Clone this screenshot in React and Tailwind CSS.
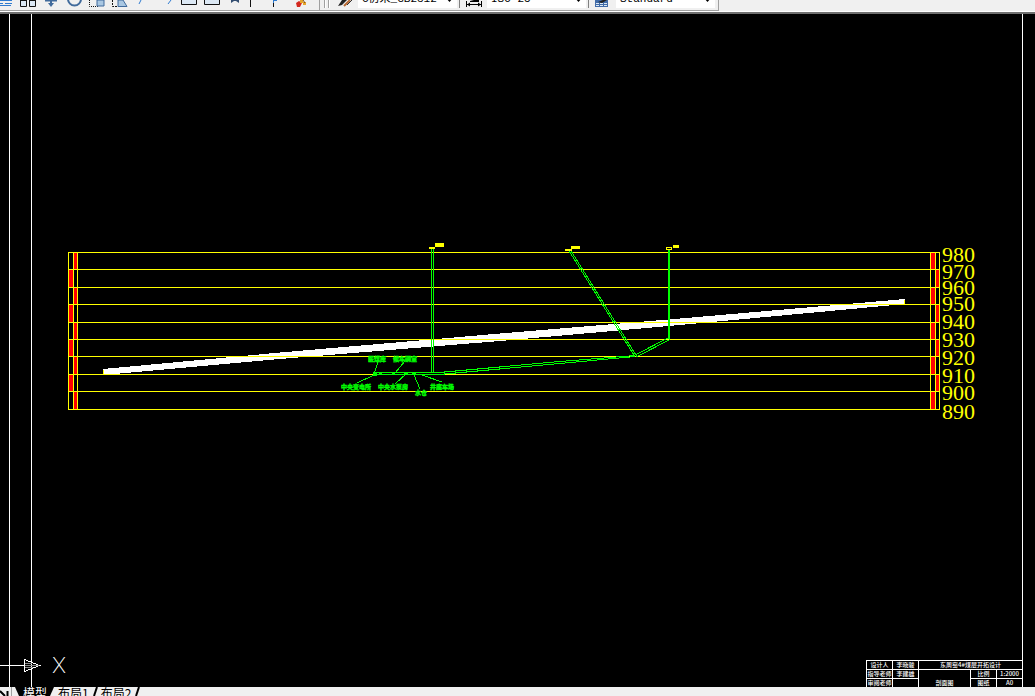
const levels = [
  { label: '980', y: 252, textY: 262 },
  { label: '970', y: 269, textY: 279 },
  { label: '960', y: 287, textY: 295 },
  { label: '950', y: 304, textY: 311 },
  { label: '940', y: 322, textY: 329 },
  { label: '930', y: 339, textY: 347 },
  { label: '920', y: 356, textY: 365 },
  { label: '910', y: 374, textY: 383 },
  { label: '900', y: 391, textY: 400 },
  { label: '890', y: 409, textY: 419 },
]

const roomLabels = [
  { text: '医煤库', x: 368, y: 361 },
  { text: '候车硐室', x: 393, y: 361 },
  { text: '中央变电所', x: 341, y: 389 },
  { text: '中央水泵房', x: 378, y: 389 },
  { text: '水仓', x: 415, y: 395 },
  { text: '井底车场', x: 430, y: 389 },
]

const leaders = [
  'M374 374 L378 362',
  'M395 373 L405 361',
  'M374 375 L357 383',
  'M406 374 L395 384',
  'M414 375 L420 389',
  'M422 375 L442 382',
]

function StyleSelect({ label, value }) {
  return (
    <div className="relative w-[99px] shrink-0">
      <select
        aria-label={label}
        defaultValue={value}
        className="block h-[22px] w-full appearance-none bg-white pt-1 pl-1 text-[11px] text-black font-['Liberation_Mono','Noto_Sans_CJK_SC',monospace]"
      >
        <option>{value}</option>
      </select>
      <svg width="7" height="4" className="pointer-events-none absolute right-1 bottom-[6px]">
        <path d="M0 0h7L3.5 4z" fill="#000" />
      </svg>
    </div>
  )
}

function IconStrip() {
  return (
    <svg width="312" height="8" viewBox="0 0 312 8" className="block" fill="none">
      <path d="M0 .5h12M0 3.5h3M5 3.5h7M0 5.5h11" stroke="#2f7bd0" />
      <path d="M20.5 0v6.5h6V0M29.5 0v6.5h6V0" fill="#dce8f4" stroke="#111" />
      <path d="M20 .5h7M29 .5h7" stroke="#111" />
      <path d="M51 0v4M45 .5h12" stroke="#416b9c" strokeWidth="2" />
      <path d="M48 3h6l-3 4z" fill="#416b9c" />
      <path d="M68 -1a6.5 6.5 0 0 0 13 0" stroke="#416b9c" strokeWidth="2" />
      <path d="M89.5 0v6.5h9" stroke="#111" strokeDasharray="1 1" />
      <path d="M97 0h7v6h-7z" fill="#a9c7e2" stroke="#416b9c" />
      <path d="M112.5 0v6.5h5" stroke="#111" strokeDasharray="2 1" />
      <path d="M118 0h5l4 6.5h-9z" fill="#a9c7e2" stroke="#416b9c" />
      <path d="M141 0l-2 4M171 0l-3 4" stroke="#2f7bd0" />
      <path d="M181.5 -1v5.5h15V-1M204.5 -1v5.5h15V-1" fill="#dce8f4" stroke="#111" />
      <path d="M231 0h8v3l-3-2h-2l-3 2z" fill="#344f72" />
      <path d="M250.5 0v7M273.5 3v4" stroke="#111" />
      <path d="M273.5 0v3M274 .5h3" stroke="#2f7bd0" />
      <path d="M296 3l3-2 3 2-2 4h-3z" fill="#d3281e" />
      <path d="M300 0h3v2h3v3h-3v-2h-3z" fill="#e6a52c" />
      <path d="M303 0l2 3" stroke="#7b4a12" />
    </svg>
  )
}

function TopBar() {
  return (
    <header className="h-[14px] shrink-0 overflow-hidden border-b-2 border-[#707070] bg-[#f0f0f0]">
      <div className="flex h-[11px] items-end">
        <div role="toolbar" aria-label="Modify" className="h-[11px] w-[320px] shrink-0 border-r border-b border-[#a0a0a0]">
          <IconStrip />
        </div>
        <div role="toolbar" aria-label="Styles" className="flex h-[11px] w-[399px] shrink-0 items-end border-r border-b border-[#a0a0a0] pb-[2px]">
          <svg width="38" height="8" viewBox="0 0 38 8" className="shrink-0" fill="none">
            <path d="M4.5 0v8M8.5 0v8" stroke="#a0a0a0" />
            <path d="M5.5 0v8M9.5 0v8" stroke="#fff" />
            <path d="M18 6l4-6h5l-5 5z" fill="#222" />
            <path d="M24 6l6-6" stroke="#b86a33" strokeWidth="2" />
            <path d="M27 5l5-5" stroke="#333" />
          </svg>
          <StyleSelect label="Text style" value="C仿宋_GB2312" />
          <svg width="30" height="8" viewBox="0 0 30 8" className="shrink-0" fill="none">
            <path d="M2.5 0v8" stroke="#808080" />
            <path d="M9.5 1v6M24.5 1v6M10 4.5h14" stroke="#000" />
            <path d="M10 4.5l3-2v4zM24 4.5l-3-2v4zM13 1l4-1h5v2h-9z" fill="#000" />
          </svg>
          <StyleSelect label="Dimension style" value="ISO-25" />
          <svg width="30" height="8" viewBox="0 0 30 8" className="shrink-0" fill="none">
            <path d="M2.5 0v8" stroke="#808080" />
            <path d="M9 0h13v7H9z" fill="#416ba8" />
            <path d="M10 3h3v1h-3zM14 3h3v1h-3zM18 3h3v1h-3zM10 5h3v1h-3zM14 5h3v1h-3zM18 5h3v1h-3z" fill="#dce8f4" />
            <path d="M12 2l5-2h4l-5 3z" fill="#222" />
          </svg>
          <StyleSelect label="Table style" value="Standard" />
        </div>
      </div>
      <div className="h-px bg-white" />
    </header>
  )
}

function Section() {
  return (
    <svg
      width="1035"
      height="673"
      viewBox="0 14 1035 673"
      className="absolute top-0 left-0"
      fill="none"
      shapeRendering="crispEdges"
    >
      {/* sheet frame */}
      <path d="M9.5 14V687M31.5 14V687M1022.5 14V687" stroke="#fff" />

      {/* scale bars, red on alternate levels */}
      {levels.slice(0, -1).map((level, i) => {
        const h = levels[i + 1].y - level.y
        return (
          <g key={level.label} fill="#f00">
            <rect x={i % 2 === 0 ? 74 : 69} y={level.y} width={i % 2 === 0 ? 3 : 4} height={h} />
            <rect x={i % 2 === 0 ? 931 : 936} y={level.y} width={i % 2 === 0 ? 4 : 3} height={h} />
          </g>
        )
      })}

      {/* coal seam */}
      <path d="M103 369L280 352.5L500 333.5L680 318.5L905 299V304L680 325L500 341L280 359L103 375z" fill="#fff" />

      <path
        d="M68.5 252V410M73.5 252V410M77.5 252V410M930.5 252V410M935.5 252V410M939.5 252V410"
        stroke="#ff0"
      />
      {levels.map((level) => (
        <path key={level.label} d={`M68 ${level.y + 0.5}H940`} stroke="#ff0" />
      ))}
      <path d="M103.5 370V374M904.5 300V304" stroke="#ff0" />

      {/* shafts and roadways */}
      <g stroke="#0f0">
        <path d="M431.5 249V373M433.5 249V373" />
        <path d="M568.5 250L634.5 356M570.5 250L636.5 356" />
        <path d="M669 250V339" strokeWidth="2" />
        <path d="M635 355L669 337.5M636 357L670 339.5" />
        <path d="M374 372.5H439L560 361.5L635 355.5M374 374.5H439L560 363.5L635 356.5" />
        {leaders.map((d) => (
          <path key={d} d={d} />
        ))}
      </g>
      <path d="M373 372h4v4h-4zM379 373h3v2h-3zM392 373h3v2h-3zM404 373h4v2h-4zM412 373h4v2h-4z" fill="#0f0" />

      {/* shaft collars */}
      <path d="M429 247h6v2h-6zM435 243h9v4h-9zM565 249h7v2h-7zM571 246h9v3h-9zM673 245h6v3h-6z" fill="#ff0" />
      <path d="M666.5 247.5h5v2h-5z" stroke="#ff0" />

      <g
        className="text-[6px] font-bold font-['Noto_Sans_CJK_SC',sans-serif]"
        fill="#0f0"
        stroke="#0f0"
        strokeWidth="0.4"
      >
        {roomLabels.map((room) => (
          <text key={room.text} x={room.x} y={room.y}>{room.text}</text>
        ))}
      </g>
      <g className="text-[22px] font-['Liberation_Serif',serif]" fill="#ff0">
        {levels.map((level) => (
          <text key={level.label} x="942" y={level.textY}>{level.label}</text>
        ))}
      </g>
    </svg>
  )
}

function AxisMark() {
  return (
    <div className="absolute bottom-[10px] left-0 flex items-center text-white">
      <svg width="52" height="14" viewBox="0 0 52 14" fill="none" shapeRendering="crispEdges">
        <path d="M0 7.5H24M24.5 1.5V13.5L39.5 7.5L24.5 1.5" stroke="#fff" />
        <path d="M25 5.5h7M25 7.5h14M25 9.5h8" stroke="#888" />
      </svg>
      <span className="text-[22px] leading-6 font-extralight font-['Inter',sans-serif]">X</span>
    </div>
  )
}

function TitleBlock() {
  return (
    <div className="absolute right-3 bottom-0 h-[27px] w-[157px] overflow-hidden">
      <table className="w-full table-fixed border-collapse text-center text-[6px] leading-[8px] font-medium text-white font-['Noto_Sans_CJK_SC',sans-serif] [&_td]:h-[9px] [&_td]:border [&_td]:border-white [&_td]:p-0 [&_td]:whitespace-nowrap">
        <colgroup>
          <col className="w-[26px]" />
          <col className="w-[26px]" />
          <col className="w-[52px]" />
          <col className="w-[26px]" />
          <col className="w-[26px]" />
        </colgroup>
        <tbody>
          <tr>
            <td>设计人</td>
            <td>李晓骏</td>
            <td colSpan={3}>东周窑4#煤层开拓设计</td>
          </tr>
          <tr>
            <td>指导老师</td>
            <td>李建雄</td>
            <td rowSpan={2} className="align-bottom">剖面图</td>
            <td>比例</td>
            <td>1:2000</td>
          </tr>
          <tr>
            <td>审阅老师</td>
            <td></td>
            <td>图纸</td>
            <td>A0</td>
          </tr>
        </tbody>
      </table>
    </div>
  )
}

function LayoutTabs() {
  return (
    <footer className="flex h-[9px] shrink-0 items-start overflow-hidden bg-[#f0f0f0] text-[12px] leading-3 font-['Noto_Sans_CJK_SC',sans-serif]">
      <svg width="23" height="9" viewBox="0 0 23 9" className="shrink-0" fill="none">
        <path d="M15 0h8v9h-4z" fill="#000" />
        <path d="M0 4l5 5M7.5 4v5" stroke="#000" strokeWidth="2" />
        <path d="M11.5 0v9" stroke="#a0a0a0" />
      </svg>
      <button type="button" className="bg-black text-white">模型</button>
      <svg width="11" height="9" viewBox="0 0 11 9" className="shrink-0">
        <path d="M0 0h7L3 9H0z" fill="#000" />
      </svg>
      <button type="button" className="text-black">布局1</button>
      <svg width="12" height="9" viewBox="0 0 12 9" className="shrink-0" fill="none">
        <path d="M8 0L5 9" stroke="#000" strokeWidth="2" />
      </svg>
      <button type="button" className="text-black">布局2</button>
      <svg width="12" height="9" viewBox="0 0 12 9" className="shrink-0" fill="none">
        <path d="M8 0L5 9" stroke="#000" strokeWidth="2" />
      </svg>
    </footer>
  )
}

export default function App() {
  return (
    <div className="flex h-screen flex-col overflow-hidden bg-black">
      <TopBar />
      <main className="relative min-h-0 flex-1 overflow-hidden">
        <Section />
        <AxisMark />
        <TitleBlock />
      </main>
      <LayoutTabs />
    </div>
  )
}
